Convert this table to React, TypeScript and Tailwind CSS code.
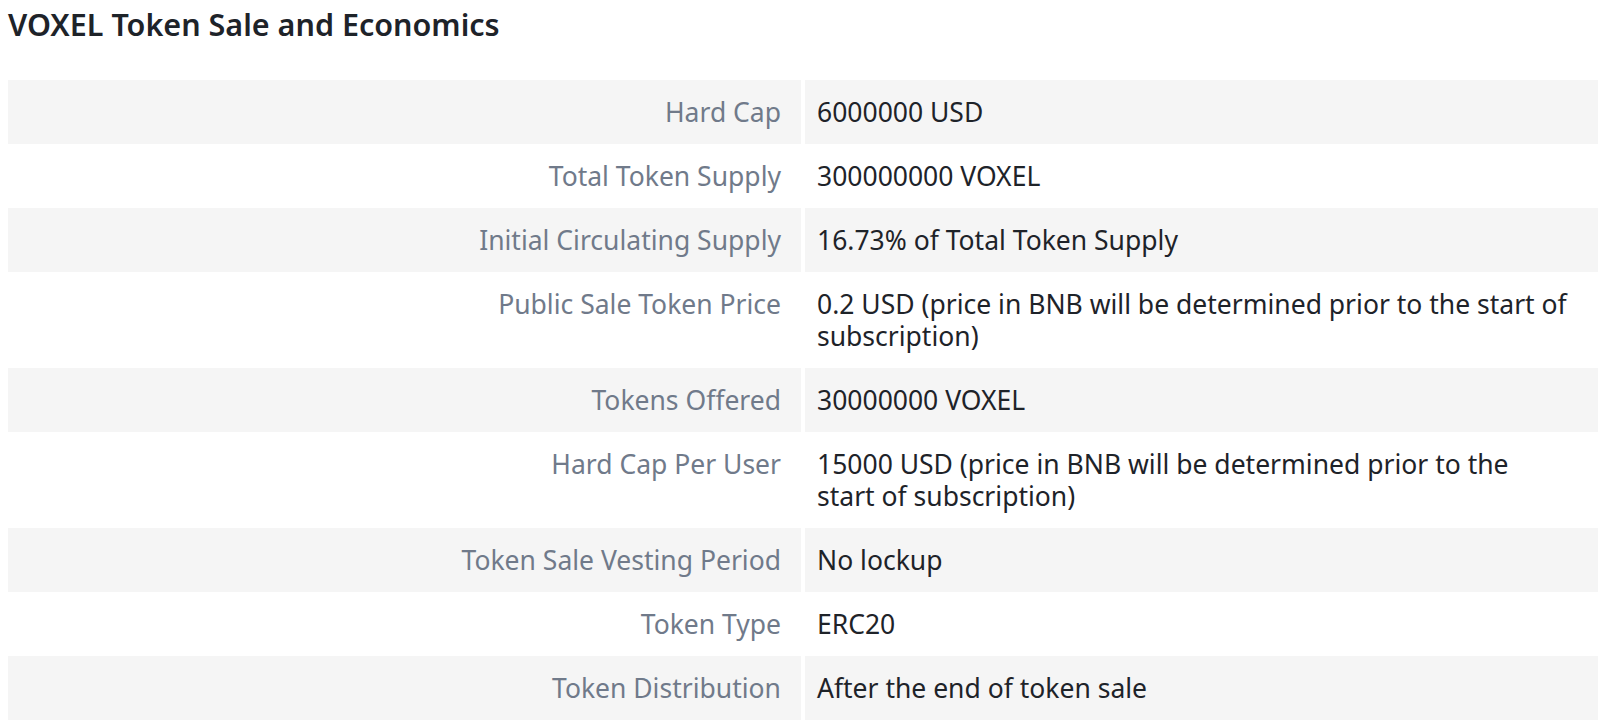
type Row = {
  label: string;
  value: string;
};

const rows: Row[] = [
  { label: "Hard Cap", value: "6000000 USD" },
  { label: "Total Token Supply", value: "300000000 VOXEL" },
  { label: "Initial Circulating Supply", value: "16.73% of Total Token Supply" },
  { label: "Public Sale Token Price", value: "0.2 USD (price in BNB will be determined prior to the start of subscription)" },
  { label: "Tokens Offered", value: "30000000 VOXEL" },
  { label: "Hard Cap Per User", value: "15000 USD (price in BNB will be determined prior to the start of subscription)" },
  { label: "Token Sale Vesting Period", value: "No lockup" },
  { label: "Token Type", value: "ERC20" },
  { label: "Token Distribution", value: "After the end of token sale" },
];

export default function App() {
  return (
    <div className="bg-white pl-2 pt-1 font-['Noto_Sans',sans-serif] text-[#1e2329]">
      <h2 className="text-[30.5px] leading-10 font-semibold">VOXEL Token Sale and Economics</h2>

      <div className="mt-9 grid grid-cols-2 gap-x-1 text-[26.5px] leading-8">
        {rows.map((row, i) => (
          <div key={row.label} className="contents">
            <div className={`py-4 pr-5 text-right text-[#707a8a] ${i % 2 === 0 ? "bg-[#f5f5f5]" : "bg-white"}`}>
              {row.label}
            </div>
            <div className={`py-4 pl-3 pr-7 ${i % 2 === 0 ? "bg-[#f5f5f5]" : "bg-white"}`}>
              {row.value}
            </div>
          </div>
        ))}
      </div>
    </div>
  );
}
